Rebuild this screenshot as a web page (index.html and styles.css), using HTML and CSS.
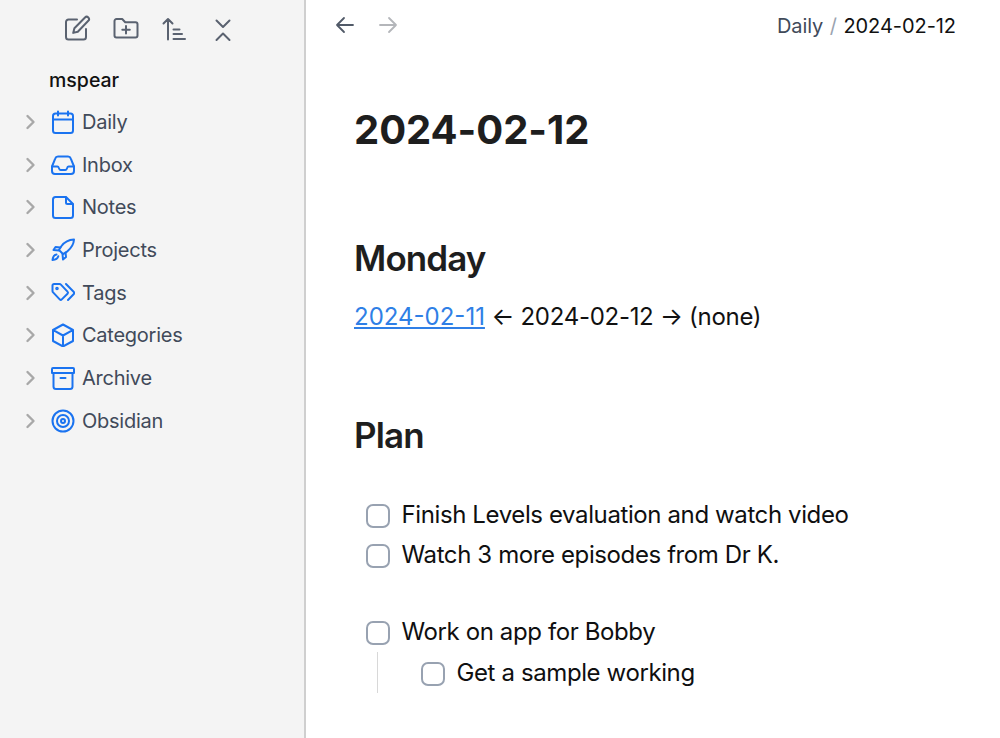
FILE: index.html
```html
<!DOCTYPE html>
<html lang="en">
<head>
<meta charset="utf-8">
<title>2024-02-12</title>
<link rel="stylesheet" href="styles.css">
</head>
<body>
<div class="app">
  <aside class="sidebar">
    <div class="toolbar">
      <svg class="tool" viewBox="0 0 28 28"><path d="M14 4.500H5.500A2.500 2.500 0 0 0 3 7v15a2.500 2.500 0 0 0 2.500 2.500h15A2.500 2.500 0 0 0 23 22v-8"/><path d="M22 2.500a2.300 2.300 0 0 1 3.300 3.300L14.800 16.700l-4.600 1.200 1.200-4.600z"/></svg>
      <svg class="tool" viewBox="0 0 28 28"><path d="M2.500 6A2 2 0 0 1 4.500 4h5.700l3 3.200h10.300a2 2 0 0 1 2 2v11.300a2 2 0 0 1-2 2h-19a2 2 0 0 1-2-2z"/><path d="M14 11v7.500M10.300 14.700h7.500"/></svg>
      <svg class="tool" viewBox="0 0 28 28"><path d="M8 24.500V4M3.500 8.500L8 4l4.500 4.500M13.500 14.500h6M13.500 19h8.500M13.500 24h11.500"/></svg>
      <svg class="tool" viewBox="0 0 28 28"><path d="M7.500 5.500l6.500 6.500 6.500-6.500M7.500 25l6.500-6.500 6.500 6.500"/></svg>
    </div>
    <div class="vault">mspear</div>
    <nav class="tree">
      <div class="row"><svg class="chev" viewBox="0 0 12 16"><path d="M2.500 2l6 6-6 6"/></svg><svg class="ico" viewBox="0 0 24 24"><path d="M7 1.500v4M17 1.500v4M2 9.500h20M4.500 3.500h15A2.500 2.500 0 0 1 22 6v14.500a2.500 2.500 0 0 1-2.500 2.500h-15A2.500 2.500 0 0 1 2 20.500V6a2.500 2.500 0 0 1 2.500-2.500z"/></svg><span>Daily</span></div>
      <div class="row"><svg class="chev" viewBox="0 0 12 16"><path d="M2.500 2l6 6-6 6"/></svg><svg class="ico" viewBox="0 0 24 24"><path d="M1 13.500h5.300a1.500 1.500 0 0 1 1.400 1l.6 1.500a1.500 1.500 0 0 0 1.400 1h4.600a1.500 1.500 0 0 0 1.400-1l.6-1.500a1.500 1.500 0 0 1 1.400-1H23"/><path d="M1 13.500V18a3 3 0 0 0 3 3h16a3 3 0 0 0 3-3v-4.500L19.800 5.600A3 3 0 0 0 17 3.500H7a3 3 0 0 0-2.800 2.100z"/></svg><span>Inbox</span></div>
      <div class="row"><svg class="chev" viewBox="0 0 12 16"><path d="M2.500 2l6 6-6 6"/></svg><svg class="ico" viewBox="0 0 24 24"><path d="M15 2H4.500A2.500 2.500 0 0 0 2 4.500v16A2.500 2.500 0 0 0 4.500 23h15a2.500 2.500 0 0 0 2.500-2.500V9z"/><path d="M15 2.500v5a1.500 1.500 0 0 0 1.500 1.500h5"/></svg><span>Notes</span></div>
      <div class="row"><svg class="chev" viewBox="0 0 12 16"><path d="M2.500 2l6 6-6 6"/></svg><svg class="ico" viewBox="0 0 24 24"><path d="M23 1.500c-5.500.3-9.500 2.500-12.500 6.500-1 1.300-1.800 2.700-2.500 4l4 4c1.500-.7 3-1.600 4.200-2.600 4-3.200 6.500-7 6.800-11.900z"/><path d="M9.500 9.500l-5-.5L2.500 12l5.500.5M14.500 14.500l.5 4.500-3 2.500-.5-5.500"/><path d="M5.500 16.500c-2 .3-3.500 1.500-4 5.500 3.500-.2 5.200-1.500 5.800-3.700"/></svg><span>Projects</span></div>
      <div class="row"><svg class="chev" viewBox="0 0 12 16"><path d="M2.500 2l6 6-6 6"/></svg><svg class="ico" viewBox="0 0 24 24"><path d="M1.500 4.500A1.500 1.500 0 0 1 3 3h5.500a2 2 0 0 1 1.400.6l6.600 7a1.500 1.500 0 0 1 0 2.100l-5.700 5.700a1.500 1.500 0 0 1-2.100 0L2.100 11.400a2 2 0 0 1-.6-1.400z"/><circle cx="6" cy="7.500" r=".8"/><path d="M15 3l7.600 7.700a1.800 1.800 0 0 1 0 2.500L17 19"/></svg><span>Tags</span></div>
      <div class="row"><svg class="chev" viewBox="0 0 12 16"><path d="M2.500 2l6 6-6 6"/></svg><svg class="ico" viewBox="0 0 24 24"><path d="M12 1.500l10 5.500v11l-10 5.500L2 18V7zM2.300 7.200L12 12.500l9.700-5.300M12 12.500v11"/></svg><span>Categories</span></div>
      <div class="row"><svg class="chev" viewBox="0 0 12 16"><path d="M2.500 2l6 6-6 6"/></svg><svg class="ico" viewBox="0 0 24 24"><path d="M2 2h20a1 1 0 0 1 1 1v4H1V3a1 1 0 0 1 1-1zM2.500 7v13.500A2.500 2.500 0 0 0 5 23h14a2.500 2.500 0 0 0 2.500-2.500V7M9.500 12h5"/></svg><span>Archive</span></div>
      <div class="row"><svg class="chev" viewBox="0 0 12 16"><path d="M2.500 2l6 6-6 6"/></svg><svg class="ico" viewBox="0 0 24 24"><circle cx="12" cy="12" r="10.500"/><circle cx="12" cy="12" r="6"/><circle cx="12" cy="12" r="2"/></svg><span>Obsidian</span></div>
    </nav>
  </aside>
  <main class="main">
    <header class="topbar">
      <div class="nav-arrows">
        <svg class="arrow" viewBox="0 0 20 20"><path d="M18 10H2M9 3l-7 7 7 7"/></svg>
        <svg class="arrow off" viewBox="0 0 20 20"><path d="M2 10h16M11 3l7 7-7 7"/></svg>
      </div>
      <div class="crumbs"><span class="crumb-parent">Daily</span><span class="crumb-sep">/</span><span class="crumb-cur">2024-02-12</span></div>
    </header>
    <article class="note">
      <h1>2024-02-12</h1>
      <h2 class="monday">Monday</h2>
      <p class="links"><a href="#">2024-02-11</a> ← 2024-02-12 → (none)</p>
      <h2 class="plan">Plan</h2>
      <ul class="tasks first">
        <li><span class="box"></span>Finish Levels evaluation and watch video</li>
        <li><span class="box"></span>Watch 3 more episodes from Dr K.</li>
      </ul>
      <ul class="tasks second">
        <li><span class="box"></span>Work on app for Bobby
          <ul class="sub">
            <li><span class="box"></span>Get a sample working</li>
          </ul>
        </li>
      </ul>
    </article>
  </main>
</div>
</body>
</html>
```
FILE: styles.css
```css
* { box-sizing: border-box; }
html, body { margin: 0; height: 100%; overflow: hidden; }
body { font-family: Inter, "Liberation Sans", sans-serif; color: #0f0f10; background: #fff; }
.app { display: flex; height: 738px; }

.sidebar { width: 306px; flex: none; background: #f4f4f4; border-right: 2px solid #cfcfcf; }
.toolbar { display: flex; gap: 20.500px; padding: 15px 0 0 63px; height: 62px; }
.tool { width: 28px; height: 28px; fill: none; stroke: #5a6270; stroke-width: 2; stroke-linecap: round; stroke-linejoin: round; }
.vault { padding-left: 49px; font-size: 19.500px; font-weight: 500; line-height: 36px; height: 38.500px; color: #111; }
.tree { display: flex; flex-direction: column; }
.row { display: flex; align-items: center; height: 42.700px; font-size: 20px; letter-spacing: -.25px; color: #414a5a; }
.chev { width: 12px; height: 16px; margin-left: 25px; fill: none; stroke: #a8a8a8; stroke-width: 2.400; stroke-linecap: round; stroke-linejoin: round; }
.ico { width: 24px; height: 24px; margin: 0 7.500px 0 13.500px; fill: none; stroke: #1a73f0; stroke-width: 2; stroke-linecap: round; stroke-linejoin: round; }

.main { flex: 1; min-width: 0; }
.topbar { display: flex; justify-content: space-between; align-items: center; height: 51px; padding: 0 44px 0 29px; }
.nav-arrows { display: flex; gap: 23px; margin-top: -1px; }
.arrow { width: 20px; height: 20px; fill: none; stroke: #515a68; stroke-width: 1.800; stroke-linecap: round; stroke-linejoin: round; }
.arrow.off { stroke: #b4b6ba; }
.crumbs { display: flex; gap: 6.500px; font-size: 20px; letter-spacing: -.06px; }
.crumb-parent { color: #414a5a; }
.crumb-sep { color: #9aa3af; }
.crumb-cur { color: #111; }

.note { padding: 0 0 0 48px; }
h1 { margin: 51px 0 0; font-size: 40px; line-height: 56px; font-weight: 700; letter-spacing: -.05px; color: #1e1e1e; }
h2 { margin: 0; font-size: 35px; line-height: 44px; font-weight: 600; letter-spacing: -.9px; color: #1e1e1e; }
.monday { margin-top: 78px; }
.links { margin: 19px 0 0; font-size: 24px; line-height: 36px; letter-spacing: -.28px; color: #111; }
.links a { color: #2f7fe6; letter-spacing: 0; }
.plan { margin-top: 78px; }
.tasks { list-style: none; margin: 0; padding: 0 0 0 12px; font-size: 24px; letter-spacing: -.39px; }
.tasks li { line-height: 40px; }
.first { margin-top: 38px; }
.second { margin-top: 37px; }
.box { display: inline-block; width: 24px; height: 24px; margin-right: 11.500px; vertical-align: -5px; background: #fff; border: 2px solid #98a2b1; border-radius: 7px; }
.sub { list-style: none; margin: 0 0 0 11px; padding: 0 0 0 43px; border-left: 1px solid #d8d8d8; }
.sub li { line-height: 41px; }
```
